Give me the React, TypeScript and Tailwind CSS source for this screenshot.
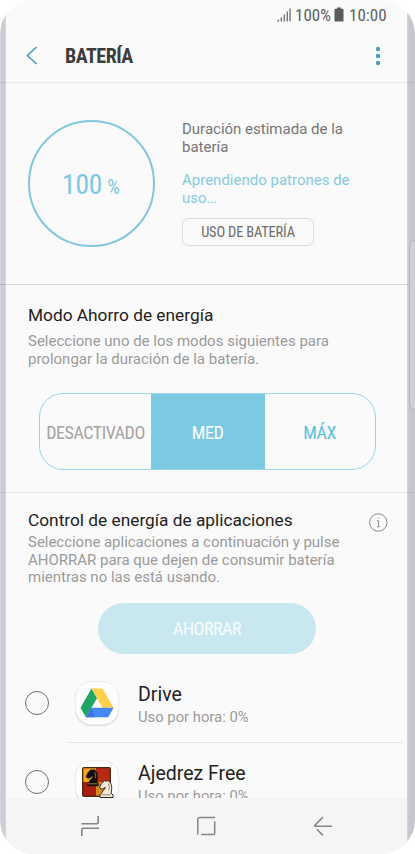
import React from 'react';

interface CondensedProps {
  children: React.ReactNode;
  className?: string;
}

// Narrow face used for titles, buttons and figures
function Condensed({ children, className = '' }: CondensedProps) {
  return (
    <span className={`inline-block whitespace-nowrap [font-stretch:75%] ${className}`}>{children}</span>
  );
}

function StatusBar() {
  return (
    <div className="flex h-[30px] items-center pl-[277px] text-[#5f5f5f]">
      <svg width="14" height="14" viewBox="0 0 14 14" fill="#6a6a6a">
        <path d="M-0.5 13.5L2 11V13.5Z" />
        <rect x="3.7" y="9.5" width="1.3" height="4" />
        <rect x="6.6" y="6.5" width="1.3" height="7" />
        <rect x="9.6" y="3.5" width="1.3" height="10" />
        <rect x="12.4" y="0.5" width="1.3" height="13" />
      </svg>
      <Condensed className="ml-1 w-[39px] text-[17px] leading-5">100%</Condensed>
      <svg className="-mt-px" width="10" height="15" viewBox="0 0 10 15" fill="#5a5a5a">
        <path d="M3 0.5h4v1.3h1.6a0.9 0.9 0 0 1 0.9 0.9v11a0.9 0.9 0 0 1-0.9 0.9H1.4a0.9 0.9 0 0 1-0.9-0.9v-11a0.9 0.9 0 0 1 0.9-0.9H3z" />
      </svg>
      <Condensed className="ml-[5px] text-[17px] leading-5">10:00</Condensed>
    </div>
  );
}

function Header() {
  return (
    <header className="flex h-[53px] items-center border-b border-black/[0.07] pl-[26px]">
      <svg className="-mt-px" width="12" height="19" viewBox="0 0 12 19" fill="none" stroke="#4f9fc0" strokeWidth="1.7">
        <path d="M10.6 1L1.4 9.5L10.6 18" />
      </svg>
      <h1 className="ml-[27px] w-[307px] text-[20px] font-bold leading-6 tracking-[-0.5px] text-[#3c3c3c]">
        <Condensed>BATERÍA</Condensed>
      </h1>
      <svg className="-mt-px" width="12" height="20" viewBox="0 0 12 20" fill="#4f9dbb">
        <circle cx="6" cy="3" r="2.2" />
        <circle cx="6" cy="10" r="2.2" />
        <circle cx="6" cy="17" r="2.2" />
      </svg>
    </header>
  );
}

function BatterySummary() {
  return (
    <section className="flex h-[202px] border-b border-black/[0.13] pl-[27.5px] pt-[37px]">
      <div className="flex h-[127px] w-[127px] shrink-0 items-center justify-center rounded-full border-[2.5px] border-[#82c7de] text-[#7cc8e0]">
        <Condensed className="mt-0.5 text-[27.5px] leading-8 tracking-[-0.2px]">100</Condensed>
        <Condensed className="ml-[5px] mt-[6px] text-[20px] leading-6">%</Condensed>
      </div>
      <div className="ml-[27.5px] pt-px text-[15px] leading-[17.6px]">
        <p className="text-[#767676]">Duración estimada de la<br />batería</p>
        <p className="mt-4 text-[#86cae0]">Aprendiendo patrones de<br />uso…</p>
        <button className="mt-[11px] flex h-7 w-[132px] items-center justify-center rounded-md border border-[#dcdcdc] text-[14.5px] tracking-[-0.2px] text-[#6d6d6d]">
          <Condensed>USO DE BATERÍA</Condensed>
        </button>
      </div>
    </section>
  );
}

function PowerMode() {
  return (
    <section className="h-[208px] border-b border-black/[0.07] pl-7 pt-[18px]">
      <h2 className="text-[17.3px] leading-6 text-[#222]">Modo Ahorro de energía</h2>
      <p className="mt-1.5 text-[15px] leading-[17.6px] text-[#9b9b9b]">
        Seleccione uno de los modos siguientes para<br />prolongar la duración de la batería.
      </p>
      <div className="ml-[11px] mt-[25px] flex h-[77px] w-[337px] overflow-hidden rounded-[24px] border-[1.5px] border-[#9ed4e6] text-[18px] tracking-[-0.45px]">
        <button className="flex w-[111px] items-center justify-center pt-px text-[#a4a4a4]"><Condensed>DESACTIVADO</Condensed></button>
        <button className="flex w-[114px] items-center justify-center bg-[#7bcae2] pr-px pt-px text-white"><Condensed>MED</Condensed></button>
        <button className="flex flex-1 items-center justify-center pr-px pt-px text-[#5bbedb]"><Condensed>MÁX</Condensed></button>
      </div>
    </section>
  );
}

function AppControl() {
  return (
    <section className="pl-7 pt-[15px]">
      <div className="flex h-6 items-start">
        <h2 className="w-[341px] text-[17.3px] leading-6 text-[#222]">Control de energía de aplicaciones</h2>
        <svg className="mt-[5px]" width="19" height="19" viewBox="0 0 19 19" fill="none" stroke="#8a8a8a">
          <circle cx="9.3" cy="9.5" r="8.7" />
          <path d="M8 7.7h1.6v6M8.1 13.7h2.9M8.8 5h1.1" strokeWidth="1" />
        </svg>
      </div>
      <p className="mt-0.5 text-[15px] leading-[17.7px] text-[#9b9b9b]">
        <span className="tracking-[-0.03px]">Seleccione aplicaciones a continuación y pulse</span><br />AHORRAR para que dejen de consumir batería<br />mientras no las está usando.
      </p>
      <button className="ml-[70px] mt-4 flex h-[51px] w-[218px] items-center justify-center rounded-full bg-[#c9e7ef] text-[18px] tracking-[-0.5px] text-[#f6fcfd]">
        <Condensed>AHORRAR</Condensed>
      </button>
    </section>
  );
}

function DriveIcon() {
  return (
    <svg width="34" height="30" viewBox="0 0 34 30">
      <path d="M11.5 0.5L0.5 19.7L5.9 29.3L17 10.2Z" fill="#1fa463" />
      <path d="M11.5 0.5H22.6L33.6 19.7H22.5Z" fill="#ffd04b" />
      <path d="M11.4 19.7H33.6L28.2 29.3H5.9Z" fill="#4688f4" />
      <path d="M11.4 19.7L14.8 29.3H5.9Z" fill="#3c75dd" />
    </svg>
  );
}

function ChessIcon() {
  return (
    <svg width="34" height="34" viewBox="0 0 34 34">
      <rect x="2" y="2" width="29" height="30" rx="2" fill="#4a2713" />
      <path d="M3.3 3.3H16V17H3.3z" fill="#f2a81f" />
      <path d="M16 3.3h13.7V17H16z" fill="#b82a14" />
      <path d="M3.3 17H16v13.7H3.3z" fill="#a81f12" />
      <path d="M16 17h13.7v13.7H16z" fill="#d58a1e" />
      <path d="M7 20L9 17C10 14 13 13 13 11L8.5 13.5L6 12L8 7.5L11 4.5L12.5 5L14 4.5C18 6 18.5 12 17 17L18.5 18V21H7Z" fill="#130d09" stroke="#4a2812" strokeWidth="0.7" />
      <path d="M8 18.8H17.5M14.5 7C16 9 16 11 15.4 13" fill="none" stroke="#c79a6a" strokeWidth="0.7" />
      <path d="M20 32.5V29.7L22 27.5C23 25 25 24.5 25.3 22.5L22 24.3L19.5 22.5L21.5 18.5L24.7 15.5L26 16.2L28 15.6C32 18 32.4 23 31 28L33 30V32.5Z" fill="#f3ead8" stroke="#35271a" strokeWidth="1" />
      <path d="M21.5 29.8H31M28 18.5C29.8 21 29.5 23.5 28.7 25.5" fill="none" stroke="#806e58" strokeWidth="0.8" />
    </svg>
  );
}

interface AppRowProps {
  name: string;
  usage: string;
  icon: React.ReactNode;
}

function AppRow({ name, usage, icon }: AppRowProps) {
  return (
    <li className="flex h-[78px] pl-[25px]">
      <div className="mt-[27px] h-6 w-6 shrink-0 rounded-full border-[1.3px] border-[#6f6f6f]" />
      <div className="ml-[26px] mt-[17px] flex h-11 w-11 shrink-0 items-center justify-center rounded-[16px] border border-[#ededed] bg-[#fdfdfd] shadow-[0_1px_1px_rgba(0,0,0,0.12)]">
        {icon}
      </div>
      <div className="ml-[19px] pt-[19px]">
        <div className="text-[19.5px] leading-6 text-[#222]">{name}</div>
        <div className="text-[14.8px] leading-[21px] text-[#9b9b9b]">{usage}</div>
      </div>
    </li>
  );
}

function NavBar() {
  return (
    <nav className="relative ml-1.5 mr-2 flex h-14 shrink-0 items-center bg-[#f5f5f5]">
      <svg className="ml-[74px]" width="20" height="22" viewBox="0 0 20 22" fill="none" stroke="#858585" strokeWidth="1.6">
        <path d="M18.2 1V7.2a1.5 1.5 0 0 1-1.5 1.5H1.4M1.8 21V14.8a1.5 1.5 0 0 1 1.5-1.5H19" />
      </svg>
      <svg className="ml-[96px]" width="20" height="20" viewBox="0 0 20 20" fill="none" stroke="#858585" strokeWidth="1.5">
        <path d="M1.8 18.6V3.3a1.8 1.8 0 0 1 1.8-1.8H19M18.7 5.3V17a1.6 1.6 0 0 1-1.6 1.6H5.3" />
      </svg>
      <svg className="ml-[97px]" width="20" height="20" viewBox="0 0 20 20" fill="none" stroke="#858585" strokeWidth="1.6">
        <path d="M10 1L2 9.2Q1.4 10 2.4 10.3H19M3.8 13.2L10 19.4" />
      </svg>
    </nav>
  );
}

export default function App() {
  return (
    <div className="h-[854px] w-[415px] overflow-hidden bg-white font-['Roboto',sans-serif]">
      {/* Phone body: the side bezels are part of the background */}
      <div className="relative flex h-full flex-col overflow-hidden rounded-[34px] bg-[linear-gradient(90deg,#d3d4da_0,#cbccd3_3px,#cdced3_4.5px,#d9dade_6px,#fafafa_6px,#fafafa_407px,#d7d7dc_407px,#c6c7ce_409px,#c6c7ce_415px)]">
        <div className="absolute left-[409px] top-[240px] h-[170px] w-3 rounded-[6px] border border-[#b4b5bd] bg-[#cfd0d6]" />
        <StatusBar />
        <Header />
        <BatterySummary />
        <PowerMode />
        <AppControl />
        <ul className="mt-[10px] min-h-0 flex-1 overflow-hidden">
          <AppRow name="Drive" usage="Uso por hora: 0%" icon={<DriveIcon />} />
          <div className="ml-[67px] h-px w-[336px] bg-[#e6e6e6]" />
          <AppRow name="Ajedrez Free" usage="Uso por hora: 0%" icon={<ChessIcon />} />
        </ul>
        <NavBar />
      </div>
    </div>
  );
}
